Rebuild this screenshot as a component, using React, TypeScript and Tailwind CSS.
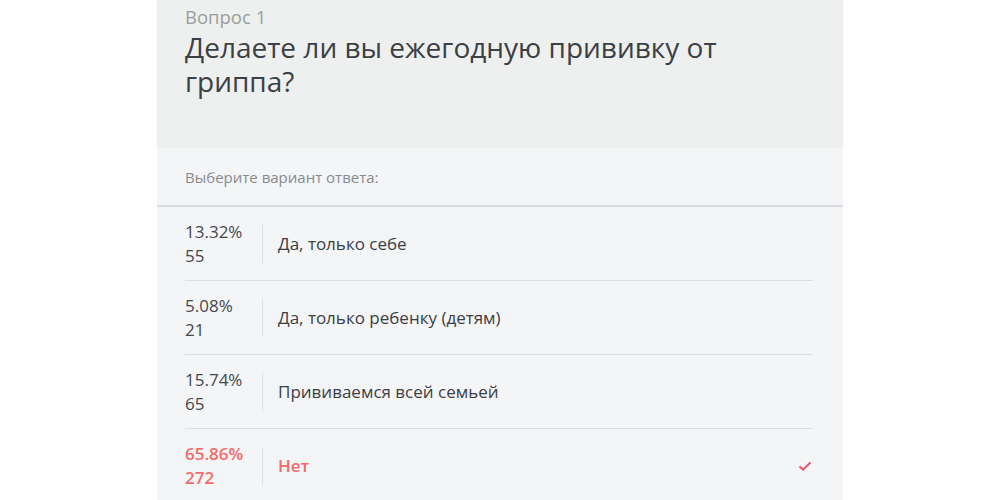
const answers = [
  { percent: '13.32%', count: 55, label: 'Да, только себе' },
  { percent: '5.08%', count: 21, label: 'Да, только ребенку (детям)' },
  { percent: '15.74%', count: 65, label: 'Прививаемся всей семьей' },
  { percent: '65.86%', count: 272, label: 'Нет', selected: true },
]

export default function App() {
  return (
    <div className="min-h-screen bg-white font-['Open_Sans',sans-serif]">
      <div className="mx-auto w-[686px]">
        <div className="h-[148px] bg-[#eef0ef] px-[28px] pt-[5px]">
          <div className="text-[18.5px] leading-[24px] text-[#9b9d9f]">Вопрос 1</div>
          <h1 className="mt-[1px] text-[28px] leading-[34px] text-[#3b4045]">
            Делаете ли вы ежегодную прививку от гриппа?
          </h1>
        </div>
        <div className="bg-[#f4f5f7] pb-10">
          <div className="flex h-[59px] items-center border-b-2 border-[#d9dbdf] px-[28px] pt-[1px] text-[15px] text-[#878b90]">
            Выберите вариант ответа:
          </div>
          <div className="px-[28px] pr-[30px]">
            {answers.map((a, i) => (
              <div
                key={i}
                className={`flex h-[74px] items-center ${i < answers.length - 1 ? 'border-b border-[#dcdee2]' : ''}`}
              >
                <div
                  className={`w-[77px] text-[17px] leading-[24px] ${a.selected ? 'font-semibold text-[#f56a6a]' : 'text-[#44484d]'}`}
                >
                  <div>{a.percent}</div>
                  <div>{a.count}</div>
                </div>
                <div className="h-[38px] w-px bg-[#dcdee2]" />
                <div
                  className={`flex-1 pl-[15px] text-[17px] ${a.selected ? 'font-semibold text-[#f56a6a]' : 'text-[#3b4045]'}`}
                >
                  {a.label}
                </div>
                {a.selected && (
                  <svg width="14" height="12" viewBox="0 0 14 12" className="mr-[1px]">
                    <path d="M1.5 6.5 L5 9.5 L12.5 2.5" fill="none" stroke="#e35c70" strokeWidth="2.2" />
                  </svg>
                )}
              </div>
            ))}
          </div>
        </div>
      </div>
    </div>
  )
}
